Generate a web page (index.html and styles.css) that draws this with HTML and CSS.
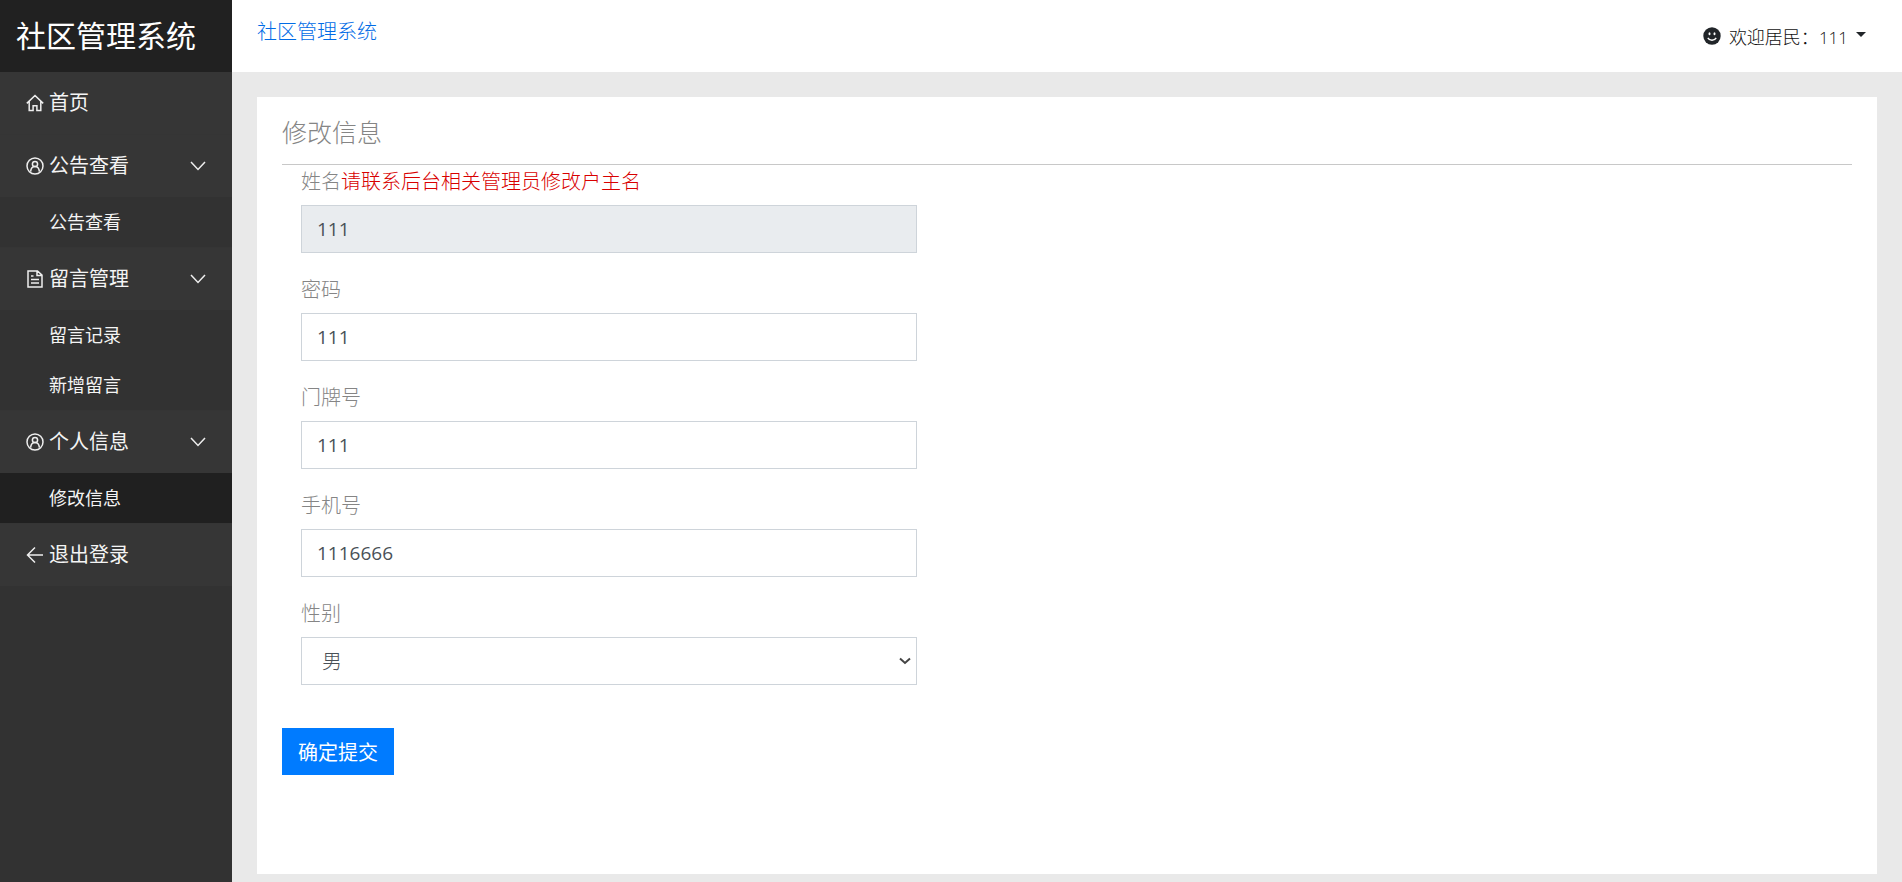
FILE: index.html
```html
<!DOCTYPE html>
<html lang="zh-CN">
  <head>
    <meta charset="UTF-8" />
    <meta name="viewport" content="width=device-width, initial-scale=1" />
    <title>社区管理系统</title>
    <link rel="stylesheet" href="styles.css">
  </head>
  <body>
    <aside class="sidebar">
      <div class="brand">社区管理系统</div>
      <nav>
        <ul class="menu">
          <li>
            <a class="menu-link" href="#">
              <svg class="icon" viewBox="0 0 18 18"><path d="M.8 9.400 9 1.500l8.200 7.900M3.200 7.600v8.900h3.900v-4.700h3.800v4.700h3.900V7.600" /></svg>
              <span>首页</span>
            </a>
          </li>
          <li>
            <a class="menu-link" href="#">
              <svg class="icon" viewBox="0 0 18 18"><circle cx="9" cy="9" r="8" /><circle cx="9" cy="7" r="2.6" /><path d="M4.6 14.6c.3-3 2-5 4.4-5s4.1 2 4.400 5" /></svg>
              <span>公告查看</span>
              <svg class="arrow" viewBox="0 0 16 10"><path d="m1 1 7 7.500L15 1" /></svg>
            </a>
            <ul class="submenu">
              <li><a href="#">公告查看</a></li>
            </ul>
          </li>
          <li>
            <a class="menu-link" href="#">
              <svg class="icon" viewBox="0 0 18 18"><path d="M2 1h9.500L16 5.200V17H2zM11 1.400v4.200h4.400M5 6h2.500M5 9.500h8M5 13h8" /></svg>
              <span>留言管理</span>
              <svg class="arrow" viewBox="0 0 16 10"><path d="m1 1 7 7.500L15 1" /></svg>
            </a>
            <ul class="submenu">
              <li><a href="#">留言记录</a></li>
              <li><a href="#">新增留言</a></li>
            </ul>
          </li>
          <li>
            <a class="menu-link" href="#">
              <svg class="icon" viewBox="0 0 18 18"><circle cx="9" cy="9" r="8" /><circle cx="9" cy="7" r="2.6" /><path d="M4.6 14.6c.3-3 2-5 4.4-5s4.1 2 4.400 5" /></svg>
              <span>个人信息</span>
              <svg class="arrow" viewBox="0 0 16 10"><path d="m1 1 7 7.500L15 1" /></svg>
            </a>
            <ul class="submenu">
              <li><a class="active" href="#">修改信息</a></li>
            </ul>
          </li>
          <li>
            <a class="menu-link" href="#">
              <svg class="icon" viewBox="0 0 18 18"><path d="M17 9H1.500M9 1.500 1.500 9 9 16.500" /></svg>
              <span>退出登录</span>
            </a>
          </li>
        </ul>
      </nav>
    </aside>

    <div class="page">
      <header class="topbar">
        <a class="home-link" href="#">社区管理系统</a>
        <button class="user" type="button">
          <svg class="smile" viewBox="0 0 18 18"><circle cx="9" cy="9" r="8.700" /><ellipse class="face" cx="6.500" cy="6.800" rx="1" ry="1.500" /><ellipse class="face" cx="11.500" cy="6.800" rx="1" ry="1.500" /><path class="mouth" d="M4.800 10.800c1.800 3.200 6.600 3.200 8.400 0" /></svg>
          <span>欢迎居民：<span class="user-name">111</span></span>
          <span class="caret"></span>
        </button>
      </header>

      <main class="content">
        <section class="card">
          <h1>修改信息</h1>
          <form>
            <div class="fields">
              <div class="form-group">
                <label for="name">姓名<span class="hint">请联系后台相关管理员修改户主名</span></label>
                <input type="text" id="name" value="111" readonly />
              </div>
              <div class="form-group">
                <label for="password">密码</label>
                <input type="text" id="password" value="111" />
              </div>
              <div class="form-group">
                <label for="house">门牌号</label>
                <input type="text" id="house" value="111" />
              </div>
              <div class="form-group">
                <label for="phone">手机号</label>
                <input type="text" id="phone" value="1116666" />
              </div>
              <div class="form-group">
                <label for="sex">性别</label>
                <div class="select-box">
                  <select id="sex">
                    <option>男</option>
                    <option>女</option>
                  </select>
                  <svg class="select-arrow" viewBox="0 0 12 8"><path d="m1 1.500 5 4.500 5-4.500" /></svg>
                </div>
              </div>
            </div>
            <button class="submit" type="submit">确定提交</button>
          </form>
        </section>
      </main>
    </div>
  </body>
</html>
```
FILE: styles.css
```css
* {
  box-sizing: border-box;
}

body {
  margin: 0;
  display: flex;
  min-height: 100vh;
  background-color: #e9e9e9;
  color: #212529;
  font-family: "Open Sans", "Noto Sans CJK SC", sans-serif;
  font-size: 20px;
  font-weight: 300;
  line-height: 30px;
}

a {
  text-decoration: none;
}

button,
input,
select {
  font-family: inherit;
  font-weight: inherit;
  border-radius: 0;
}

/* sidebar */
.sidebar {
  flex: 0 0 232px;
  background-color: #323232;
  font-weight: 400;
}

.brand {
  height: 72px;
  padding-left: 16px;
  background-color: #212121;
  color: #fff;
  font-size: 30px;
  line-height: 72px;
}

.menu,
.submenu {
  margin: 0;
  padding: 0;
  list-style: none;
}

.menu > li + li {
  border-top: 1px solid #353535;
}

.menu-link {
  display: flex;
  align-items: center;
  gap: 5px;
  height: 62px;
  padding: 0 26px;
  background-color: #363636;
  color: #f4f4f4;
}

.icon {
  width: 18px;
  height: 18px;
  fill: none;
  stroke: #eee;
  stroke-width: 1.5;
}

.arrow {
  width: 16px;
  height: 10px;
  margin-left: auto;
  fill: none;
  stroke: #eee;
  stroke-width: 1.5;
}

.submenu a {
  display: block;
  height: 50px;
  padding-left: 49px;
  color: #f4f4f4;
  font-size: 18px;
  line-height: 50px;
}

.submenu .active {
  background-color: #202020;
}

/* top bar */
.page {
  flex: 1;
  min-width: 0;
  display: flex;
  flex-direction: column;
}

.topbar {
  display: flex;
  justify-content: space-between;
  height: 72px;
  padding: 0 36px 0 25px;
  background-color: #fff;
}

.home-link {
  color: #006be6;
  line-height: 64px;
}

.user {
  display: flex;
  align-items: center;
  gap: 8px;
  padding: 0;
  border: none;
  background: none;
  color: #111;
  font-size: 18px;
  cursor: pointer;
}

.user-name {
  font-size: 17px;
}

.smile {
  width: 18px;
  height: 18px;
  fill: #212529;
}

.smile .face {
  fill: #fff;
}

.smile .mouth {
  fill: none;
  stroke: #fff;
  stroke-width: 1.4;
}

.caret {
  margin-bottom: 3px;
  border-top: 5px solid #212529;
  border-left: 5px solid transparent;
  border-right: 5px solid transparent;
}

/* form card */
.content {
  flex: 1;
  display: flex;
  flex-direction: column;
  padding: 25px 25px 8px;
}

.card {
  flex: 1;
  padding: 0 25px 25px;
  background-color: #fff;
  color: #858585;
}

.card h1 {
  margin: 0;
  padding: 20px 0 17px;
  border-bottom: 1px solid #c8c8c8;
  font-size: 25px;
  font-weight: 300;
  line-height: 30px;
}

.fields {
  width: calc(100% * 5 / 12);
  padding: 0 19px;
}

.form-group {
  margin-bottom: 20px;
}

.form-group label {
  display: block;
  margin-bottom: 6px;
  line-height: 34px;
}

.hint {
  color: #d80000;
}

.form-group input,
.form-group select {
  display: block;
  width: 100%;
  height: 48px;
  padding: 0 15px;
  border: 1px solid #ced4da;
  background-color: #fff;
  color: #495057;
  font-size: 19px;
  font-weight: 400;
}

.form-group input[readonly] {
  background-color: #e9ecef;
}

.select-box {
  position: relative;
}

.form-group select {
  appearance: none;
  padding: 0 20px;
  font-size: 20px;
  font-weight: 300;
}

.select-arrow {
  position: absolute;
  top: 20px;
  right: 6px;
  width: 12px;
  height: 8px;
  fill: none;
  stroke: #444;
  stroke-width: 2;
  pointer-events: none;
}

.submit {
  height: 47px;
  margin-top: 23px;
  padding: 0 16px;
  border: none;
  background-color: #007bff;
  color: #fff;
  font-size: 20px;
  font-weight: 400;
  cursor: pointer;
}
```
